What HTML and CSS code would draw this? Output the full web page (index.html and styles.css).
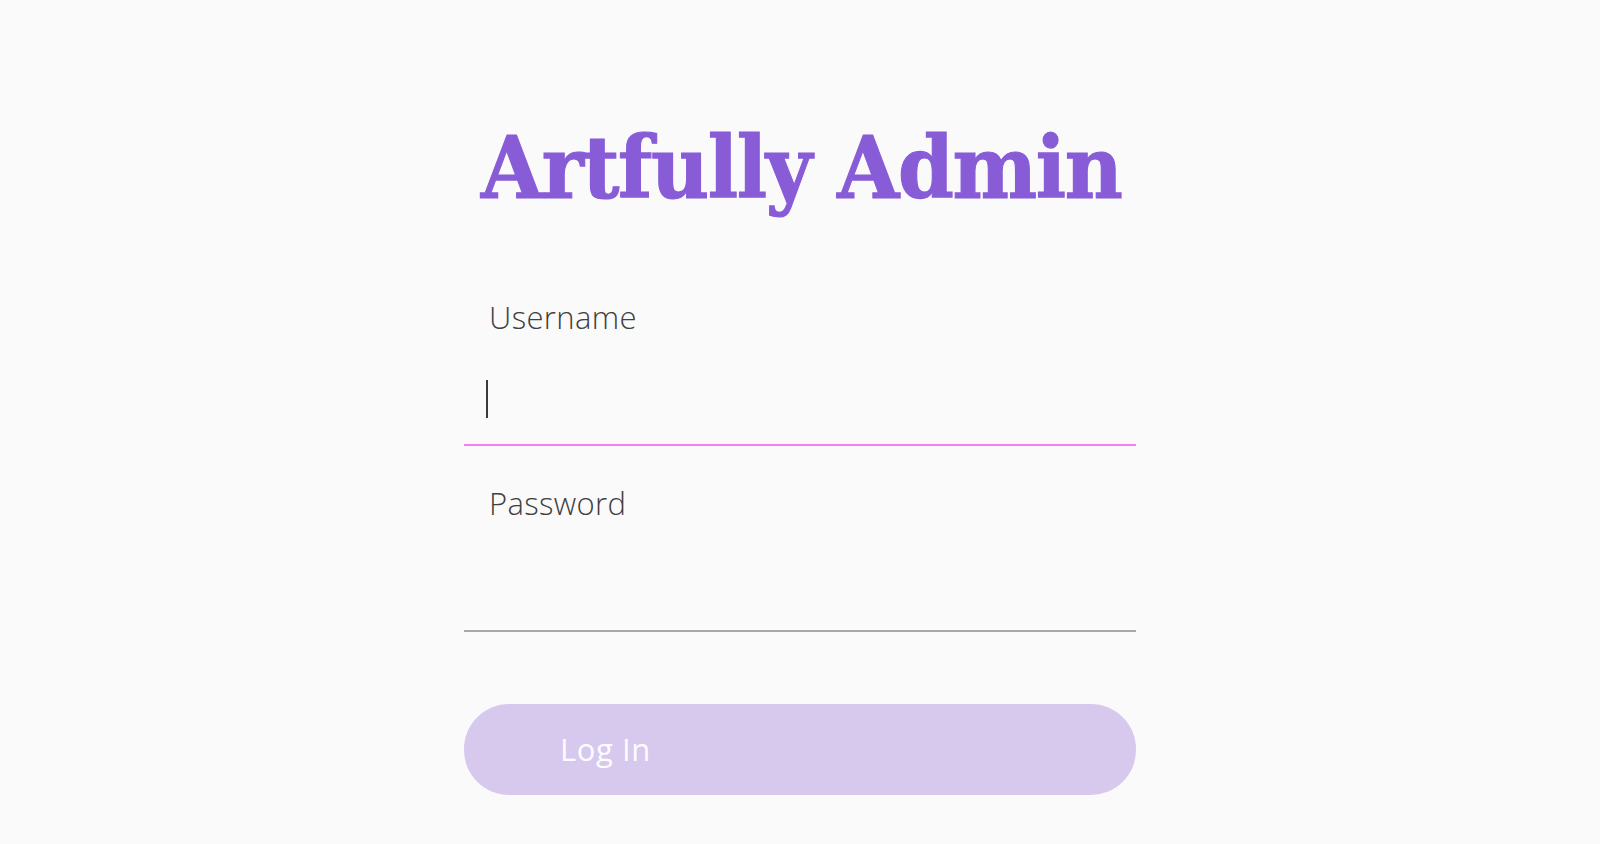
FILE: index.html
```html
<!DOCTYPE html>
<html lang="en">
<head>
<meta charset="utf-8">
<title>Artfully Admin</title>
<link rel="stylesheet" href="styles.css">
</head>
<body>
<main class="login">
  <h1 class="title"><span class="title-text">Artfully Admin</span></h1>
  <form class="form">
    <div class="field">
      <label class="label" for="username">Username</label>
      <input class="input input-focused" id="username" type="text">
      <span class="caret"></span>
    </div>
    <div class="field field-second">
      <label class="label" for="password">Password</label>
      <input class="input" id="password" type="password">
    </div>
    <button class="button" type="button">Log In</button>
  </form>
</main>
</body>
</html>
```
FILE: styles.css
```css
html, body {
  margin: 0;
  padding: 0;
  background: #fafafa;
}

body {
  font-family: "Open Sans", "Lato", sans-serif;
  color: #444444;
}

.login {
  width: 672px;
  margin: 0 auto;
  padding-top: 125px;
}

.title {
  margin: 0;
  font-family: "DejaVu Serif", serif;
  font-weight: 700;
  font-size: 86px;
  line-height: 86px;
  color: #885cd7;
  text-align: center;
  white-space: nowrap;
}

.title-text {
  display: inline-block;
  letter-spacing: -1.5px;
  -webkit-text-stroke: 1.2px #885cd7;
  transform: translateX(-7px) scaleX(0.93);
  transform-origin: center;
}

.form {
  margin-top: 86px;
  display: flex;
  flex-direction: column;
}

.field {
  position: relative;
  display: flex;
  flex-direction: column;
}

.field-second {
  margin-top: 37px;
}

.label {
  display: block;
  padding-left: 25px;
  font-size: 31px;
  font-weight: 300;
  line-height: 40px;
  letter-spacing: 0.35px;
  color: #404040;
}

.input {
  display: block;
  box-sizing: border-box;
  width: 100%;
  height: 89px;
  margin-top: 20px;
  padding: 0 22px;
  border: none;
  border-bottom: 2px solid #a8a8a8;
  background: transparent;
  font-family: "Open Sans", sans-serif;
  font-size: 28px;
  font-weight: 300;
  color: #333333;
  outline: none;
  caret-color: transparent;
}

.input-focused {
  border-bottom-color: #f87cf8;
}

.caret {
  position: absolute;
  left: 22px;
  top: 83px;
  width: 2px;
  height: 38px;
  background: #3a3a3a;
}

.button {
  margin-top: 72px;
  height: 91px;
  width: 100%;
  box-sizing: border-box;
  border: none;
  border-radius: 45px;
  background: #d7c9ee;
  color: #fdfbff;
  font-family: "Open Sans", sans-serif;
  font-size: 31px;
  font-weight: 400;
  letter-spacing: 0.6px;
  text-align: left;
  padding: 0 0 2px 96px;
  cursor: pointer;
}
```
